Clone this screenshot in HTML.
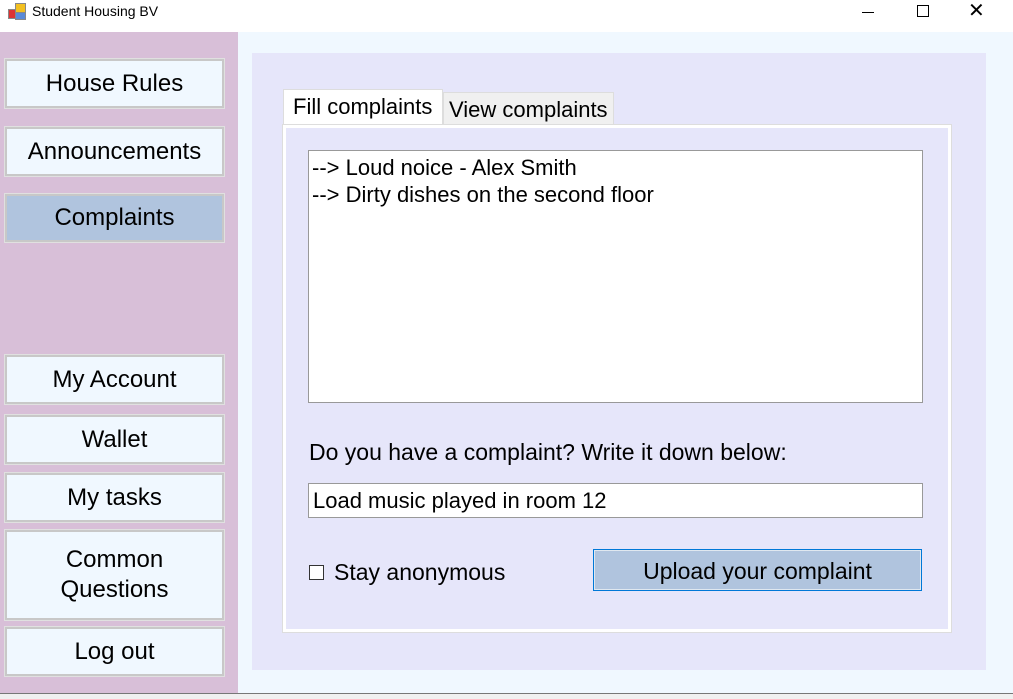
<!DOCTYPE html><html><head><style>
body{margin:0;width:1013px;height:699px;position:relative;overflow:hidden;background:#fff;font-family:"Liberation Sans",sans-serif;color:#000}
.a{position:absolute;box-sizing:border-box}
.b{position:absolute;left:5px;width:219px;box-sizing:border-box;background:#f0f8ff;border:2px solid #c8c8c8;outline:1px solid #e0e0e0;display:flex;align-items:center;justify-content:center;text-align:center;font-size:24px;line-height:30px}
</style></head><body>
<div class="a" style="left:8px;top:3px;width:18px;height:18px">
<div class="a" style="left:0;top:6px;width:8px;height:10px;background:#d33;border:1px solid #888"></div>
<div class="a" style="left:7px;top:0;width:11px;height:10px;background:#f3c020;border:1px solid #888"></div>
<div class="a" style="left:7px;top:9px;width:11px;height:8px;background:#5a8ad8;border:1px solid #888"></div></div>
<div class="a" style="left:32px;top:3px;font-size:14px">Student Housing BV</div>
<div class="a" style="left:862px;top:12px;width:12px;height:1px;background:#000"></div>
<div class="a" style="left:917px;top:5px;width:12px;height:12px;border:1px solid #000"></div>
<div class="a" style="left:968px;top:1px;font-size:20px;line-height:20px">✕</div>
<div class="a" style="left:0;top:32px;width:238px;height:661px;background:#d8bfd8"></div>
<div class="a" style="left:238px;top:32px;width:775px;height:661px;background:#f0f8ff"></div>
<div class="a" style="left:0;top:693px;width:1013px;height:6px;background:#f0f0f0;border-top:1px solid #777"></div>
<div class="b" style="top:59px;height:49px">House Rules</div>
<div class="b" style="top:127px;height:49px">Announcements</div>
<div class="b" style="top:194px;height:48px;background:#b0c4de">Complaints</div>
<div class="b" style="top:355px;height:49px">My Account</div>
<div class="b" style="top:415px;height:49px">Wallet</div>
<div class="b" style="top:473px;height:49px">My tasks</div>
<div class="b" style="top:530px;height:90px">Common<br>Questions</div>
<div class="b" style="top:627px;height:49px">Log out</div>
<div class="a" style="left:252px;top:53px;width:734px;height:617px;background:#e6e6fa"></div>
<div class="a" style="left:443px;top:92px;width:171px;height:34px;background:#f0f0f0;border:1px solid #ddd;font-size:22px;padding:4px 0 0 5px;white-space:nowrap">View complaints</div>
<div class="a" style="left:283px;top:89px;width:160px;height:38px;background:#fff;border:1px solid #ddd;border-bottom:none;font-size:22px;padding:4px 0 0 9px;white-space:nowrap">Fill complaints</div>
<div class="a" style="left:283px;top:125px;width:668px;height:507px;background:#e6e6fa;border:3px solid #fff;outline:1px solid #ddd"></div>
<div class="a" style="left:308px;top:150px;width:615px;height:253px;background:#fff;border:1px solid #999;font-size:22px;line-height:27px;padding:3px 0 0 3px">--&gt; Loud noice - Alex Smith<br>--&gt; Dirty dishes on the second floor</div>
<div class="a" style="left:309px;top:439px;font-size:23px">Do you have a complaint? Write it down below:</div>
<div class="a" style="left:308px;top:483px;width:615px;height:35px;background:#fff;border:1px solid #999;font-size:22px;padding:4px 0 0 4px">Load music played in room 12</div>
<div class="a" style="left:309px;top:565px;width:15px;height:15px;background:#fff;border:1px solid #333"></div>
<div class="a" style="left:334px;top:559px;font-size:23px">Stay anonymous</div>
<div class="a" style="left:593px;top:549px;width:329px;height:42px;background:#b0c4de;border:1px solid #0078d7;box-shadow:inset 0 0 0 1px #e0e8f0;font-size:23px;text-align:center;line-height:42px;white-space:nowrap">Upload your complaint</div>
</body></html>
